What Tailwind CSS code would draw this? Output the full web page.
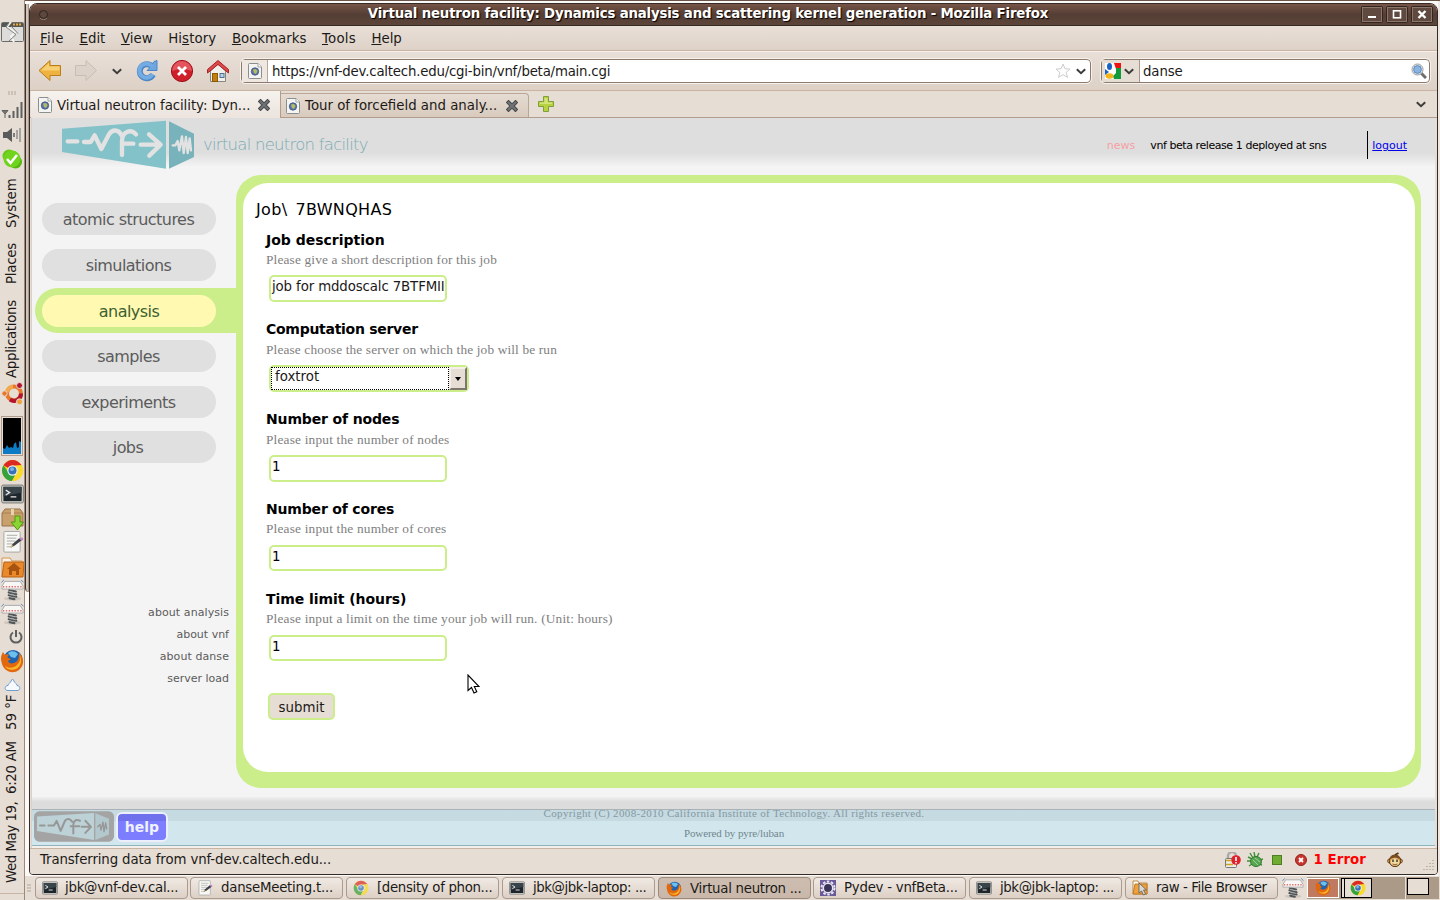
<!DOCTYPE html>
<html lang="en">
<head>
<meta charset="utf-8">
<title>Virtual neutron facility</title>
<script src="https://cdn.jsdelivr.net/npm/@tailwindcss/browser@4"></script>
</head>
<body class="w-[1440px] h-[900px] overflow-hidden bg-[#e6ddd4] text-[#1c1a18] font-['DejaVu_Sans',sans-serif] text-[13.33px] leading-none whitespace-nowrap">

<svg class="hidden">
  <symbol id="chrome" viewBox="0 0 24 24">
    <circle cx="12" cy="12" r="11" fill="#f8d51c"/>
    <path d="M12 12 2.500 6.500A11 11 0 0 1 21.500 6.500L12 7z" fill="#dc2a22"/>
    <path d="M2.500 6.500A11 11 0 0 0 11.500 23L16 15 8 14z" fill="#35a23c"/>
    <path d="M21.500 6.500A11 11 0 0 1 11.500 23L17 13 15 7z" fill="#fadb2c"/>
    <circle cx="12" cy="12" r="5.400" fill="#f3f3f3"/><circle cx="12" cy="12" r="4.200" fill="#3672b8"/><circle cx="11.500" cy="10.600" r="2" fill="#7fb0e6"/>
  </symbol>
  <symbol id="firefox" viewBox="0 0 24 24">
    <circle cx="13" cy="10.500" r="9.500" fill="#1f62ae"/><path d="M8 4C11 1 16 2 18 5L15 9 11 8z" fill="#6cc0ee"/>
    <path d="M1.500 13C0 8 2 5 3 3L5 6C6 5 8 5 9 6 8 7 7 8 8 9L11 10 8 12C9 15 13 15 16 13 19 11 19 7 19 4 24 8 25 16 19 21 12 26 3 22 1.500 13z" fill="#e2680f"/>
    <path d="M20 6C22 10 22 17 16 20 12 22 6 20 5 17 9 20 14 19 17 16 20 13 21 10 20 6z" fill="#fbb62c"/>
  </symbol>
  <symbol id="term" viewBox="0 0 24 20">
    <rect x=".7" y=".7" width="22.600" height="18.600" rx="1.500" fill="#d5d5d0" stroke="#70706c"/><rect x="2.500" y="2.500" width="19" height="15" fill="#1e262b"/><path d="M2.500 2.500h19v6l-19 4z" fill="#39434a"/>
    <path d="M5 6l4 2.500L5 11M10 13h6" fill="none" stroke="#e6e6e6" stroke-width="1.400"/>
  </symbol>
  <symbol id="note" viewBox="0 0 24 24">
    <rect x="3" y="1" width="17" height="21.500" rx="1" fill="#f7f7f5" stroke="#a5a5a0"/><path d="M6 5h11M6 8h10M6 11h9M6 14h6M6 17h5" stroke="#a9a9a5"/>
    <path d="M10 18l2-4 7-6 3 2-8 6z" fill="#3e4246"/><path d="M19 8l3-1 1.500 2-2 2z" fill="#c784c6"/><path d="M10 18l1-3 2 1z" fill="#e6bf62"/>
  </symbol>
  <symbol id="spring" viewBox="0 0 24 23">
    <ellipse cx="12" cy="20" rx="9" ry="2" fill="#cfc7be"/>
    <path d="M8.500 11l7 1.500M8 13.500l8 2M8 16.500l8 1.500M9 19.500l5 1" fill="none" stroke="#505558" stroke-width="2.200" stroke-linecap="round"/>
    <path d="M9 12.600l6 1.400M9 15.500l6 1.400" stroke="#b9bcbc" stroke-width=".8"/>
    <path d="M4 2h16l3 5v3H1V7z" fill="#f9f7f5" stroke="#aaa"/><path d="M2 7.500h20" stroke="#e0736d" stroke-width="1.600" stroke-dasharray="1.500 1.500"/>
    <path d="M.5 3L3 .5M23.500 3L21 .5" stroke="#4a84cc"/>
  </symbol>
  <symbol id="page" viewBox="0 0 14 16">
    <path d="M.5 1.500a1 1 0 0 1 1-1H10L13.500 4v10.500a1 1 0 0 1-1 1h-11a1 1 0 0 1-1-1z" fill="#f4f4f2" stroke="#8b8f8c"/><path d="M10 .5V4h3.500" fill="#fff" stroke="#a0a3a0"/>
    <circle cx="7" cy="8.500" r="3.700" fill="#5a76b0" stroke="#3c507a" stroke-width=".8"/><path d="M5 6.500l3-.5 1.500 2-1.500 3-2-1z" fill="#b5bd5c"/>
  </symbol>
  <symbol id="close" viewBox="0 0 12 12"><path d="M2.500 2.500l7 7M9.500 2.500l-7 7" stroke="#474a4c" stroke-width="4" stroke-linecap="square"/><path d="M2.500 2.500l7 7M9.500 2.500l-7 7" stroke="#707375" stroke-width="2" stroke-linecap="square"/></symbol>
  <symbol id="chev" viewBox="0 0 10 7"><path d="M.8 1.200L5 5.200l4.200-4" fill="none" stroke="#3c3c3a" stroke-width="2"/></symbol>
</svg>

<div class="flex w-[1440px] h-[900px]">

  <!-- vertical desktop panel -->
  <div class="w-[25px] shrink-0 flex flex-col items-center border-r border-[#a08878] bg-[#e6ddd4] pt-[22px]">
    <svg class="w-[23px] h-5 shrink-0" viewBox="0 0 23 20"><rect x=".5" y=".5" width="22" height="19" rx="1" fill="#dcdcda" stroke="#6b6b69"/><rect x="1" y="1" width="21" height="4" fill="#555753"/><path d="M12 2.500h9" stroke="#e9a93c" stroke-width="2" stroke-dasharray="2 1"/><path d="M10 0L6 5l8 5.500-4 4 3 5.500" fill="none" stroke="#f5f5f3" stroke-width="2"/><path d="M8 1L5 5l10 7.500-7 6.500M10 4l7 7.500" fill="none" stroke="#80807e"/></svg>
    <svg class="w-2 h-1 mt-[49px] shrink-0" viewBox="0 0 8 4"><path d="M1 0v4M4 0v4M7 0v4" stroke="#b5a598"/></svg>
    <svg class="w-[22px] h-[17px] mt-[7px] shrink-0" viewBox="0 0 22 17"><path d="M1 8.500h6L4 12zM4 12v4" fill="#777" stroke="#5f6160"/><path d="M8.500 13v3M12.500 9v7" stroke="#5f6160" stroke-width="2"/><path d="M16.500 5v11M20.500 0v16" stroke="#5f6160" stroke-width="2"/></svg>
    <svg class="w-5 h-4 mt-2 shrink-0" viewBox="0 0 20 16"><path d="M1 5h4l5-4v14l-5-4H1z" fill="#5a5c5b"/><path d="M12 6v4" stroke="#5a5c5b" stroke-width="1.500"/><path d="M15 3v9M18 1v14" stroke="#a6a29e" stroke-width="2"/></svg>
    <svg class="w-5 h-5 mt-1.5 shrink-0" viewBox="0 0 20 20"><circle cx="7" cy="7" r="6.500" fill="#67c916"/><circle cx="13.500" cy="13" r="6.500" fill="#55b80f"/><circle cx="10" cy="10" r="8.500" fill="#70d31d"/><path d="M5 10l3.500 4L15 6" fill="none" stroke="#fff" stroke-width="2.600"/></svg>
    <div class="h-[51px] mt-2 flex items-center [writing-mode:vertical-rl] rotate-180">System</div>
    <div class="h-[43px] mt-[13px] flex items-center [writing-mode:vertical-rl] rotate-180 tracking-[-0.25px]">Places</div>
    <div class="h-[79px] mt-[15px] flex items-center [writing-mode:vertical-rl] rotate-180 tracking-[-0.3px]">Applications</div>
    <svg class="w-[23px] h-[23px] mt-1 shrink-0" viewBox="0 0 23 23"><circle cx="13" cy="11.500" r="7" fill="none" stroke="#e9762a" stroke-width="4"/><path d="M9 17.500a7 7 0 0 0 11-6" fill="none" stroke="#b3152c" stroke-width="4"/><path d="M6 10a7 7 0 0 1 6-5.500" fill="none" stroke="#f3a94c" stroke-width="4"/><circle cx="3.500" cy="11.500" r="2.700" fill="#e9762a" stroke="#e6ddd4"/><circle cx="18.500" cy="3.500" r="3" fill="#b3152c" stroke="#e6ddd4"/><circle cx="18.500" cy="19.800" r="3" fill="#f3a03c" stroke="#e6ddd4"/></svg>
    <svg class="w-[22px] h-10 mt-[11px] shrink-0" viewBox="0 0 22 40"><rect x=".5" y=".5" width="21" height="39" fill="#e6ddd4" stroke="#b09c8d"/><rect x="2" y="2" width="18" height="36" fill="#000"/><path d="M2 38v-6l2 1 2-4 2 3 2-1 2 1 1-4 2-2 1 6 2-1v-6l2 1v12z" fill="#0a7bc4"/></svg>
    <svg class="w-[23px] h-[23px] mt-[3px] shrink-0"><use href="#chrome"/></svg>
    <svg class="w-[23px] h-5 mt-[2px] shrink-0"><use href="#term"/></svg>
    <svg class="w-[23px] h-[23px] mt-[4px] shrink-0" viewBox="0 0 23 23"><path d="M1 5l3-4h15l3 4v13H1z" fill="#c9a06c" stroke="#97754a"/><path d="M1 5h21" stroke="#a98253"/><path d="M10 1h3v6h-3z" fill="#e6d2af"/><path d="M14 8h5v6h3.500L16.500 22 10 14h4z" fill="#8ad436" stroke="#4e9a06"/></svg>
    <svg class="w-[23px] h-6 -mt-px shrink-0"><use href="#note"/></svg>
    <svg class="w-[23px] h-[21px] mt-[3px] shrink-0" viewBox="0 0 23 21"><path d="M1 20V1h8l2 3h10v4" fill="#f6f1ea" stroke="#d79550"/><path d="M3 5h20L22 20H1z" fill="#e9892a" stroke="#b86314"/><path d="M13 6l7 6h-2v6h-3v-4h-4v4H8v-6H6z" fill="#a65410"/></svg>
    <svg class="w-[23px] h-[23px] mt-px shrink-0"><use href="#spring"/></svg>
    <svg class="w-[23px] h-[23px] mt-px shrink-0"><use href="#spring"/></svg>
    <svg class="w-4 h-4 mt-[3px] ml-2 shrink-0" viewBox="0 0 16 16"><path d="M5 3.500a5.500 5.500 0 1 0 6 0M8 1v7" fill="none" stroke="#5d5f5e" stroke-width="2"/></svg>
    <svg class="w-6 h-6 mt-1 shrink-0"><use href="#firefox"/></svg>
    <svg class="w-[17px] h-[14px] mt-[5px] shrink-0" viewBox="0 0 17 14"><path d="M3 12.500c-3-1-2-5 1-5C4 5 7 5 7 3l1.500-2L10 3c0 2 3 2 3 4.500 3 0 4 4 1 5z" fill="#f6faff" stroke="#6f9fd0"/></svg>
    <div class="h-9 mt-[2px] flex items-center [writing-mode:vertical-rl] rotate-180">59 °F</div>
    <div class="h-[54px] mt-[10px] flex items-center [writing-mode:vertical-rl] rotate-180 tracking-[-0.3px]">6:20 AM</div>
    <div class="h-[83px] mt-[6px] flex items-center [writing-mode:vertical-rl] rotate-180 tracking-[-0.45px]">Wed May 19,</div>
    <div class="w-full h-px mt-[10px] bg-[#c8b4a4]"></div>
  </div>

  <div class="flex-1 flex flex-col min-w-0">
    <div class="h-[876px] flex bg-[#fbf9f7]">
      <!-- edge of the window lying behind -->
      <div class="w-1 shrink-0 flex flex-col">
        <div class="h-1 border-t border-[#6b5548] bg-white"></div>
        <div class="h-[588px] border-l border-[#3c312a] bg-[#cfc5bd] border-r border-r-[#a8988c] rounded-bl"></div>
      </div>

      <!-- browser window -->
      <div class="w-[1409px] shrink-0 flex flex-col border-t border-[#6b5548] pt-[2px] bg-[#fbf9f7]">
       <div class="h-[872px] flex flex-col border border-[#352b26] rounded-t-lg rounded-b overflow-hidden bg-[#e6ddd4]">
        <div class="h-[22px] shrink-0 flex items-center justify-center bg-linear-to-b from-[#775446] via-[#543e35] to-[#5c4439] border-b border-[#352b26] text-white font-bold relative">
          <svg class="absolute left-[8px] top-[5px] w-[11px] h-[11px]" viewBox="0 0 11 11"><circle cx="5.500" cy="5.500" r="4" fill="#5e473d" stroke="#2e2420"/><path d="M2 9a4.500 4.500 0 0 0 7 0" fill="none" stroke="#9a8176"/></svg>
          <span class="[text-shadow:1px_1px_1px_#000] -ml-[51px] -mt-[2px] tracking-[-0.18px]">Virtual neutron facility: Dynamics analysis and scattering kernel generation - Mozilla Firefox</span>
          <div class="absolute right-[4px] top-[2px] flex gap-[3px]">
            <svg class="w-[22px] h-[17px]" viewBox="0 0 22 17"><rect x=".5" y=".5" width="21" height="16" rx="1.500" fill="#604a40" stroke="#32261f"/><rect x="1.500" y="1.500" width="19" height="14" fill="none" stroke="#8c756a"/><path d="M7 11h8" stroke="#fff" stroke-width="2"/></svg>
            <svg class="w-[22px] h-[17px]" viewBox="0 0 22 17"><rect x=".5" y=".5" width="21" height="16" rx="1.500" fill="#604a40" stroke="#32261f"/><rect x="1.500" y="1.500" width="19" height="14" fill="none" stroke="#8c756a"/><rect x="7.500" y="4.800" width="7" height="7" fill="none" stroke="#fff" stroke-width="1.600"/></svg>
            <svg class="w-[22px] h-[17px]" viewBox="0 0 22 17"><rect x=".5" y=".5" width="21" height="16" rx="1.500" fill="#604a40" stroke="#32261f"/><rect x="1.500" y="1.500" width="19" height="14" fill="none" stroke="#8c756a"/><path d="M7.500 5l7 7M14.500 5l-7 7" stroke="#fff" stroke-width="2.400"/></svg>
          </div>
        </div>

        <div class="h-[25px] shrink-0 flex items-center pl-[10px] pt-px gap-[15.600px] bg-linear-to-b from-[#e8dfd7] to-[#ded2c8] border-b border-[#c9b3a3]">
          <span class="tracking-[0.4px]"><u>F</u>ile</span><span><u>E</u>dit</span><span><u>V</u>iew</span><span class="tracking-[0.1px]">Hi<u>s</u>tory</span><span><u>B</u>ookmarks</span><span class="tracking-[0.2px]"><u>T</u>ools</span><span><u>H</u>elp</span>
        </div>

        <!-- navigation toolbar -->
        <div class="h-10 shrink-0 flex items-center pl-2 bg-linear-to-b from-[#e8dfd8] to-[#ddd1c6] border-t border-t-[#f6f1ec] border-b border-b-[#c9b3a3]">
          <svg class="w-6 h-6 shrink-0" viewBox="0 0 24 24"><path d="M1 11.500L12 1.500v5h10.500v10H12v5z" fill="#f0b23e" stroke="#b8801a"/><path d="M3 11.500l8-7.500v3.500h10.500v4z" fill="#f7cf74"/></svg>
          <svg class="w-6 h-6 ml-3 shrink-0" viewBox="0 0 24 24"><path d="M22.500 11.500L12 1.500v5H1.500v10H12v5z" fill="#dcd2c9" stroke="#c9bdb2"/></svg>
          <svg class="w-[10px] h-[7px] ml-[14px] shrink-0"><use href="#chev"/></svg>
          <svg class="w-6 h-6 ml-[13px] shrink-0" viewBox="0 0 24 24"><path d="M18 15.500a7 7 0 1 1-1-8" fill="none" stroke="#4a86c8" stroke-width="6"/><path d="M22 1.500v10H12l3-3 4-6z" fill="#6ea5df" stroke="#4a86c8"/><path d="M17.500 15a7 7 0 1 1-.5-7.500" fill="none" stroke="#74abe2" stroke-width="4"/></svg>
          <svg class="w-6 h-6 ml-[11px] shrink-0" viewBox="0 0 24 24"><circle cx="12" cy="12" r="10.600" fill="#cf1f2b" stroke="#9b1018"/><path d="M2 12a10 10 0 0 1 20 0q-10-4-20 0z" fill="#e4545c"/><path d="M8 8l8 8M16 8l-8 8" stroke="#fff" stroke-width="2.800"/></svg>
          <svg class="w-6 h-6 ml-3 shrink-0" viewBox="0 0 24 24"><path d="M4.500 12v10.500h15V12L12 5z" fill="#f0efec" stroke="#868683"/><path d="M1.500 14v-3.500L12 1.500l10.500 9V14L12 5.500z" fill="#dd4848" stroke="#a82424"/><rect x="6.500" y="14.500" width="5" height="8" fill="#c17d11" stroke="#8f5902"/><rect x="14" y="14.500" width="4" height="4" fill="#b9d3ee" stroke="#55708c"/></svg>
          <div class="w-[850px] h-6 ml-[11px] flex items-center bg-white border border-[#8c7a6c] rounded-sm outline outline-[#f6f1ec] shrink-0">
            <div class="w-[26px] h-full bg-[#efe8e2] border-r border-[#b8a698] flex items-center justify-center"><svg class="w-[14px] h-4"><use href="#page"/></svg></div>
            <span class="ml-[4px] mt-px tracking-[-0.21px]">https://vnf-dev.caltech.edu/cgi-bin/vnf/beta/main.cgi</span>
            <svg class="w-4 h-4 ml-auto" viewBox="0 0 16 16"><path d="M8 1l2 4.700 5 .4-3.800 3.300 1.300 5L8 11.700l-4.500 2.700 1.300-5L1 6.100l5-.4z" fill="#fdfdfd" stroke="#ccc"/></svg>
            <svg class="w-[10px] h-[7px] ml-[5px] mr-1"><use href="#chev"/></svg>
          </div>
          <div class="w-[329px] h-6 ml-[10px] flex items-center bg-white border border-[#8c7a6c] rounded-sm outline outline-[#f6f1ec] shrink-0">
            <div class="w-[38px] h-full bg-[#e6ddd4] border-r border-[#a8968a] flex items-center pl-[3px] gap-[3px]">
              <svg class="w-4 h-4" viewBox="0 0 16 16"><rect width="16" height="16" fill="#fff"/><path d="M9 0h7v6h-5z" fill="#e11"/><path d="M11 5h5v11H9l-1-3 3-3z" fill="#129a3c"/><path d="M0 6l4 3-4 3z" fill="#1c62c4"/><ellipse cx="4.500" cy="3.500" rx="2.500" ry="3.500" fill="#1c62c4"/><ellipse cx="4.500" cy="13" rx="4" ry="2.700" fill="#f3b41b"/></svg>
              <svg class="w-[10px] h-[7px]"><use href="#chev"/></svg>
            </div>
            <span class="ml-[3px] mt-px tracking-[-0.1px]">danse</span>
            <svg class="w-4 h-4 ml-auto mr-[2px]" viewBox="0 0 16 16"><path d="M10 10l5 5" stroke="#6d6d6b" stroke-width="3"/><circle cx="6.500" cy="6.500" r="5.500" fill="#f2f2f0" stroke="#9a9a98"/><circle cx="6.500" cy="6.500" r="3.900" fill="#8ab4e4" stroke="#5a88bc"/></svg>
          </div>
        </div>

        <!-- tabs -->
        <div class="h-[27px] shrink-0 flex items-end border-b border-[#b39c8c] bg-[#e6ddd4] pl-px">
          <div class="w-[250px] h-[27px] -mb-px shrink-0 flex items-center pl-[7px] bg-linear-to-b from-[#f6f2ee] to-[#ece4dd] border-r border-[#b39c8c]">
            <svg class="w-[14px] h-4"><use href="#page"/></svg><span class="ml-[5px] mt-[2px] tracking-[-0.07px]">Virtual neutron facility: Dyn...</span>
            <svg class="w-3 h-3 ml-auto mr-[10px]"><use href="#close"/></svg>
          </div>
          <div class="w-[248px] h-6 shrink-0 flex items-center pl-[5px] bg-linear-to-b from-[#e6dcd3] to-[#d8cabd] border-t border-r border-[#b8a696] rounded-tr-sm">
            <svg class="w-[14px] h-4"><use href="#page"/></svg><span class="ml-[5px]">Tour of forcefield and analy...</span>
            <svg class="w-3 h-3 ml-auto mr-[10px]"><use href="#close"/></svg>
          </div>
          <svg class="w-4 h-4 ml-[9px] mb-[5px]" viewBox="0 0 16 16"><path d="M5.500.5h5v5h5v5h-5v5h-5v-5h-5v-5h5z" fill="#b8d13e" stroke="#7da03a"/><path d="M6.500 2h3v4.500H14V8H2V6.500h4.500z" fill="#d5e37c"/></svg>
          <svg class="w-[10px] h-[7px] ml-auto mr-[11px] mb-[9px]"><use href="#chev"/></svg>
        </div>

        <!-- web page -->
        <div class="h-[730px] shrink-0 flex flex-col ml-px mr-[2px] bg-[#f4f4f4] border-l border-[#d8d0ca]">
          <div class="h-[50px] shrink-0 flex items-center bg-linear-to-b from-[#dedede] from-70% to-[#f6f6f6] pl-7 pr-[28px]">
            <svg class="w-[136px] h-[50px] shrink-0 mt-[2px]" viewBox="180 358 408 150">
              <path d="M186 387L498 363V507L186 457z" fill="#84c2c9"/><path d="M507 365L582 402V472L507 507z" fill="#78b3bb"/>
              <g fill="none" stroke="#e2e2e2" stroke-width="13" stroke-linecap="round" stroke-linejoin="round"><path d="M203 425H232M252 427H272L284 407 304 448 327 404C335 390 355 386 365 408M366 466V424C366 396 392 386 408 404M366 432H400"/><path d="M422 435H480M447 404L482 435 448 468"/>
              <path d="M518 437H526L533 424 538 452 546 410 551 460 558 412 563 460 569 416 573 452" stroke-width="7"/></g>
            </svg>
            <span class="ml-[7px] mt-[5px] text-[16.500px] tracking-[-0.75px] font-extralight text-[#7cabb2]">virtual neutron facility</span>
            <span class="ml-auto mt-[5px] text-[11px] text-[#f79fa2]">news</span>
            <span class="ml-[15px] mt-[5px] text-[11px] tracking-[-0.43px] text-black">vnf beta release 1 deployed at sns</span>
            <div class="w-px h-7 ml-[41px] mt-[4px] bg-black"></div>
            <span class="ml-1 mt-[5px] text-[11px] text-[#0000ee] underline">logout</span>
          </div>

          <div class="h-[629px] shrink-0 flex">
            <div class="w-[204px] shrink-0 flex flex-col items-end text-[#5b5b5b]">
              <div class="w-full pl-[10px] pt-[35px] flex flex-col text-base text-center tracking-[-0.55px] gap-[14px] leading-none">
                <div class="w-[174px] h-8 rounded-full bg-[#e0e0e0] pt-[9px] pr-px leading-4">atomic structures</div>
                <div class="w-[174px] h-8 rounded-full bg-[#e0e0e0] pt-[9px] pr-px leading-4">simulations</div>
                <div class="w-[201px] h-[45px] -ml-[7px] -mt-[7px] rounded-l-full bg-[#cbee8b] p-[7px] pb-0"><div class="w-[174px] h-8 rounded-full bg-[#fff9b2] text-[#3c6030] pt-[9px] leading-4">analysis</div></div>
                <div class="w-[174px] h-8 -mt-[7px] rounded-full bg-[#e0e0e0] pt-[9px] pr-px leading-4">samples</div>
                <div class="w-[174px] h-8 rounded-full bg-[#e0e0e0] pt-[9px] pr-px leading-4">experiments</div>
                <div class="w-[174px] h-8 -mt-px rounded-full bg-[#e0e0e0] pt-[9px] pr-[2px] leading-4">jobs</div>
              </div>
              <div class="mt-[144px] pr-[7px] flex flex-col items-end gap-[11px] text-[11px] leading-[11px]">
                <span class="tracking-[0.08px]">about analysis</span><span>about vnf</span><span class="tracking-[0.08px]">about danse</span><span>server load</span>
              </div>
            </div>

            <!-- job form -->
            <div class="w-[1185px] h-[613px] mt-[7px] shrink-0 rounded-[25px] bg-[#cbee8b] pt-2 pl-[7px]">
              <div class="w-[1172px] h-[589px] rounded-[25px] bg-white flex flex-col items-start pl-[23px] pt-[18px] text-black">
                <div class="h-[29px] -ml-[10px] pt-px text-base leading-4 tracking-[0.35px] [word-spacing:2.500px]">Job\ 7BWNQHAS</div>
                <div class="h-5 flex items-center text-[14px] font-bold">Job description</div>
                <div class="h-5 flex items-center text-[13.33px] tracking-[0.16px] text-[#808080] font-['Liberation_Serif',serif]">Please give a short description for this job</div>
                <div class="w-[178px] h-[27px] mt-[5px] ml-[3px] border-2 border-[#cbee8b] rounded-[5px] pl-px pt-[3px] overflow-hidden text-[#1c1a18] tracking-[-0.12px]">job for mddoscalc 7BTFMII</div>

                <div class="h-5 mt-[17px] flex items-center text-[14px] font-bold tracking-[-0.28px]">Computation server</div>
                <div class="h-5 mt-px flex items-center text-[13.33px] tracking-[0.14px] text-[#808080] font-['Liberation_Serif',serif]">Please choose the server on which the job will be run</div>
                <div class="w-[200px] h-[27px] mt-[5px] ml-[3px] border-2 border-[#cbee8b] rounded-[5px] flex">
                  <div class="w-[178px] h-[23px] border border-dotted border-black pl-[3px] pt-[2px] text-[#1c1a18]">foxtrot</div>
                  <div class="w-[18px] h-[23px] bg-[#e6ddd4] border-2 border-t-[#f4efea] border-l-[#f4efea] border-r-[#7d756e] border-b-[#7d756e] flex items-center justify-center"><svg class="w-[6px] h-1" viewBox="0 0 6 4"><path d="M0 0h6L3 4z"/></svg></div>
                </div>

                <div class="h-5 mt-[17px] flex items-center text-[14px] font-bold tracking-[-0.15px]">Number of nodes</div>
                <div class="h-5 mt-px flex items-center text-[13.33px] tracking-[0.19px] text-[#808080] font-['Liberation_Serif',serif]">Please input the number of nodes</div>
                <div class="w-[178px] h-[27px] mt-[5px] ml-[3px] border-2 border-[#cbee8b] rounded-[5px] pl-px pt-[3px]">1</div>

                <div class="h-5 mt-[17px] flex items-center text-[14px] font-bold tracking-[-0.18px]">Number of cores</div>
                <div class="h-5 flex items-center text-[13.33px] tracking-[0.19px] text-[#808080] font-['Liberation_Serif',serif]">Please input the number of cores</div>
                <div class="w-[178px] h-[26px] mt-[6px] ml-[3px] border-2 border-[#cbee8b] rounded-[5px] pl-px pt-[3px]">1</div>

                <div class="h-5 mt-[18px] flex items-center text-[14px] font-bold tracking-[-0.06px]">Time limit (hours)</div>
                <div class="h-5 flex items-center text-[13.33px] tracking-[0.18px] text-[#808080] font-['Liberation_Serif',serif]">Please input a limit on the time your job will run. (Unit: hours)</div>
                <div class="w-[178px] h-[26px] mt-[6px] ml-[3px] border-2 border-[#cbee8b] rounded-[5px] pl-px pt-[3px]">1</div>

                <div class="w-[67px] h-[27px] mt-8 ml-[2px] border-2 border-[#cbee8b] rounded-[5px] bg-[#e6ddd4] flex items-center justify-center pt-[2px] text-[#1c1a18]">submit</div>
              </div>
            </div>
          </div>

          <div class="h-3 shrink-0 bg-linear-to-b from-[#f0f0f0] to-[#dcdcdc] to-40%"></div>
          <div class="h-[37px] shrink-0 border-t border-[#a9b2b6] border-b border-b-[#8fb4be] bg-linear-to-b from-[#c6dae2] from-[11px] to-[#d2e6ed] to-[11px] flex pl-[2px]">
            <svg class="w-[80px] h-[31px] mt-px shrink-0" viewBox="102 665 240 92" preserveAspectRatio="none"><rect x="102" y="666" width="240" height="90" rx="16" fill="#a4a4a4"/>
              <path d="M111 681L282 671V751L111 724z" fill="#bdd2d6"/><path d="M286 672L327 688V735L286 751z" fill="#b3c8cc"/>
              <g fill="none" stroke="#979797" stroke-width="6" stroke-linecap="round" stroke-linejoin="round"><path d="M120 708H134M145 708H162L170 694 182 724 195 694Q206 682 217 697M220 732V704Q224 686 240 694M212 710H238M245 712H272M256 694L273 712 256 730"/><path d="M293 712L300 705 303 722 309 698 312 726 317 700 320 718" stroke-width="4"/></g></svg>
            <div class="w-[52px] h-[30px] mt-[2px] ml-[2px] shrink-0 rounded-[6px] border-2 border-[#eceffc] bg-linear-to-b from-[#6f70ec] from-[7px] to-[#7c7dff] to-[7px] text-[#f0f2ff] font-bold text-[14px] flex items-center justify-center">help</div>
            <div class="flex-1 flex flex-col items-center text-[11px] text-[#6f868f] font-['Liberation_Serif',serif] -ml-[135px]">
              <span class="mt-[-2px] text-[#8499a1] tracking-[0.34px]">Copyright (C) 2008-2010 California Institute of Technology. All rights reserved.</span>
              <span class="mt-[9px] tracking-[-0.09px]">Powered by pyre/luban</span>
            </div>
          </div>
          <div class="h-[2px] bg-[#f4efea]"></div>
        </div>

        <div class="flex-1 flex items-center border-t border-[#c9b3a3] bg-[#e6ddd4] pl-[10px] pr-0.5 pb-[3px]">
          <span class="tracking-[-0.12px]">Transferring data from vnf-dev.caltech.edu...</span>
          <svg class="w-4 h-4 ml-auto" viewBox="0 0 16 16"><path d="M3 7V4a4 4 0 0 1 8 0v3" fill="none" stroke="#aaa" stroke-width="2.400"/><rect x=".5" y="6.500" width="11" height="9" rx="1" fill="#ececea" stroke="#777"/><path d="M1 8.500h5M1 12.500h7" stroke="#c9a41c" stroke-width="1.500"/><circle cx="11" cy="8" r="4.800" fill="#e0202a"/><path d="M11 5v4M11 10v1.500" stroke="#fff" stroke-width="1.600"/></svg>
          <svg class="w-4 h-4 ml-[6px]" viewBox="0 0 16 16"><path d="M5 7L1 5M6 6L3 1M8 5L7 0M10 5l2-4M4 9L0 9M5 12l-3 2M12 12l3 1M13 8l3-1" stroke="#3e8f3a" stroke-width="1.400"/><ellipse cx="9" cy="9.500" rx="5.500" ry="5" fill="#58a552" stroke="#2f7a2d"/><path d="M6 8l5 5M8 6l5 4" stroke="#a2d39c"/></svg>
          <svg class="w-[10px] h-[10px] ml-[9px]" viewBox="0 0 10 10"><rect x=".5" y=".5" width="9" height="9" fill="#6fac32" stroke="#4d7f22"/></svg>
          <svg class="w-3 h-3 ml-[13px]" viewBox="0 0 12 12"><circle cx="6" cy="6" r="5.500" fill="#c8372f" stroke="#95221c"/><path d="M4 4l4 4M8 4l-4 4" stroke="#fff" stroke-width="1.800"/></svg>
          <span class="ml-[6px] font-bold text-[#ff0000] tracking-[0.1px]">1 Error</span>
          <svg class="w-4 h-4 ml-[21px]" viewBox="0 0 16 16"><path d="M8 3l3.500-2" stroke="#5a3a18" stroke-width="2"/><circle cx="2.500" cy="9" r="2" fill="#e0aa58" stroke="#6b4520" stroke-width=".8"/><circle cx="13.500" cy="9" r="2" fill="#e0aa58" stroke="#6b4520" stroke-width=".8"/><circle cx="8" cy="8.800" r="5.800" fill="#c98f45" stroke="#5a3a18"/><path d="M3 7Q3 3 8 3t5 4q-2-1.500-5-1.500T3 7z" fill="#7a4c20"/><ellipse cx="8" cy="10" rx="4.500" ry="3.800" fill="#f4d99c"/><path d="M6 7.500v2.500M10 7.500v2.500" stroke="#222" stroke-width="1.300"/><path d="M5.500 12q2.500 1.500 5 0" fill="none" stroke="#6b4520" stroke-width=".8"/></svg>
          <svg class="w-3 h-3 ml-[20px] mt-[9px]" viewBox="0 0 12 12"><path d="M10 1v1M10 4v1M10 7v1M10 10v1M7 4v1M7 7v1M7 10v1M4 7v1M4 10v1M1 10v1" stroke="#b3a496" stroke-width="1.500"/></svg>
        </div>
       </div>
      </div>
      <div class="flex-1 border-t border-[#6b5548] bg-[#efe8e2]"></div>
    </div>

    <!-- task bar -->
    <div class="h-6 flex items-center bg-[#e6ddd4] pl-[2px]">
      <svg class="w-1 h-2 mr-1 shrink-0" viewBox="0 0 4 8"><path d="M0 1h4M0 4h4M0 7h4" stroke="#b5a598"/></svg>
      <div class="w-[153px] h-[22px] mr-[2px] shrink-0 flex items-center pl-[6px] border border-[#ab9a8d] rounded-sm bg-linear-to-b from-[#f0eae4] to-[#ddd0c5]"><svg class="w-4 h-[14px] mr-[7px]"><use href="#term"/></svg><span class="tracking-[-0.26px]">jbk@vnf-dev.cal...</span></div>
      <div class="w-[153px] h-[22px] mr-[3px] shrink-0 flex items-center pl-[6px] border border-[#ab9a8d] rounded-sm bg-linear-to-b from-[#f0eae4] to-[#ddd0c5]"><svg class="w-4 h-4 mr-2"><use href="#note"/></svg><span class="tracking-[-0.25px]">danseMeeting.t...</span></div>
      <div class="w-[153px] h-[22px] mr-[3px] shrink-0 flex items-center pl-[6px] border border-[#ab9a8d] rounded-sm bg-linear-to-b from-[#f0eae4] to-[#ddd0c5]"><svg class="w-4 h-4 mr-2 opacity-70"><use href="#chrome"/></svg><span class="tracking-[-0.33px]">[density of phon...</span></div>
      <div class="w-[153px] h-[22px] mr-[3px] shrink-0 flex items-center pl-[6px] border border-[#ab9a8d] rounded-sm bg-linear-to-b from-[#f0eae4] to-[#ddd0c5]"><svg class="w-4 h-[14px] mr-2"><use href="#term"/></svg><span class="tracking-[-0.43px]">jbk@jbk-laptop: ...</span></div>
      <div class="w-[153px] h-[22px] mr-[2px] shrink-0 flex items-center pl-[7px] pt-px border border-[#9c897b] rounded-sm bg-linear-to-b from-[#cdbdb0] to-[#c9b8aa]"><svg class="w-4 h-4 mr-2"><use href="#firefox"/></svg><span class="tracking-[-0.28px]">Virtual neutron ...</span></div>
      <div class="w-[153px] h-[22px] mr-[3px] shrink-0 flex items-center pl-[6px] border border-[#ab9a8d] rounded-sm bg-linear-to-b from-[#f0eae4] to-[#ddd0c5]"><svg class="w-4 h-4 mr-2" viewBox="0 0 16 16"><rect width="16" height="16" fill="#6a5a9a"/><circle cx="8" cy="8" r="6.500" fill="none" stroke="#e8e6f0" stroke-width="2" stroke-dasharray="2.500 1.600"/><circle cx="8" cy="8" r="4.700" fill="#3a3358" stroke="#e8e6f0" stroke-width="1.500"/></svg><span class="tracking-[-0.25px]">Pydev - vnfBeta...</span></div>
      <div class="w-[153px] h-[22px] mr-[3px] shrink-0 flex items-center pl-[6px] border border-[#ab9a8d] rounded-sm bg-linear-to-b from-[#f0eae4] to-[#ddd0c5]"><svg class="w-4 h-[14px] mr-2"><use href="#term"/></svg><span class="tracking-[-0.4px]">jbk@jbk-laptop: ...</span></div>
      <div class="w-[153px] h-[22px] mr-[4px] shrink-0 flex items-center pl-[6px] border border-[#ab9a8d] rounded-sm bg-linear-to-b from-[#f0eae4] to-[#ddd0c5]"><svg class="w-4 h-4 mr-2" viewBox="0 0 16 16"><path d="M1 14V1h5l1 2h8v11z" fill="#fff" stroke="#c08a48"/><path d="M1 14L3 4h12v10z" fill="#efa23c" stroke="#c07a24"/><path d="M7 3v10l2.500-2 2 4 2-1-2-4h3z" fill="#d8d8d6" stroke="#5a5a58" stroke-width=".8"/></svg><span class="tracking-[-0.43px]">raw - File Browser</span></div>
      <svg class="w-[22px] h-[21px] shrink-0"><use href="#spring"/></svg>
      <div class="w-[132px] h-[22px] ml-[3px] shrink-0 flex items-center bg-[#ac9a89]">
        <div class="w-8 h-5 bg-[#bf7a60] border border-white flex items-center justify-center"><svg class="w-4 h-4"><use href="#firefox"/></svg></div>
        <div class="w-[31px] h-5 ml-[2px] border border-black bg-[#e6ddd4] flex"><div class="w-[3px] border-r border-black"></div><svg class="w-4 h-4 m-auto"><use href="#chrome"/></svg></div>
        <div class="w-px h-full ml-[33px] bg-[#e6ddd4]"></div>
        <div class="w-[22px] h-[17px] ml-px mb-[3px] border border-black bg-[#e6ddd4]"></div>
      </div>
    </div>
  </div>
</div>

<!-- mouse pointer -->
<svg class="absolute left-[467px] top-[674px] w-[13px] h-5" viewBox="0 0 13 20"><path d="M1 1v15.500l3.500-3L7 19l2.800-1.200L7.300 12.500H12z" fill="#fff" stroke="#000" stroke-width="1.100"/></svg>
</body>
</html>
